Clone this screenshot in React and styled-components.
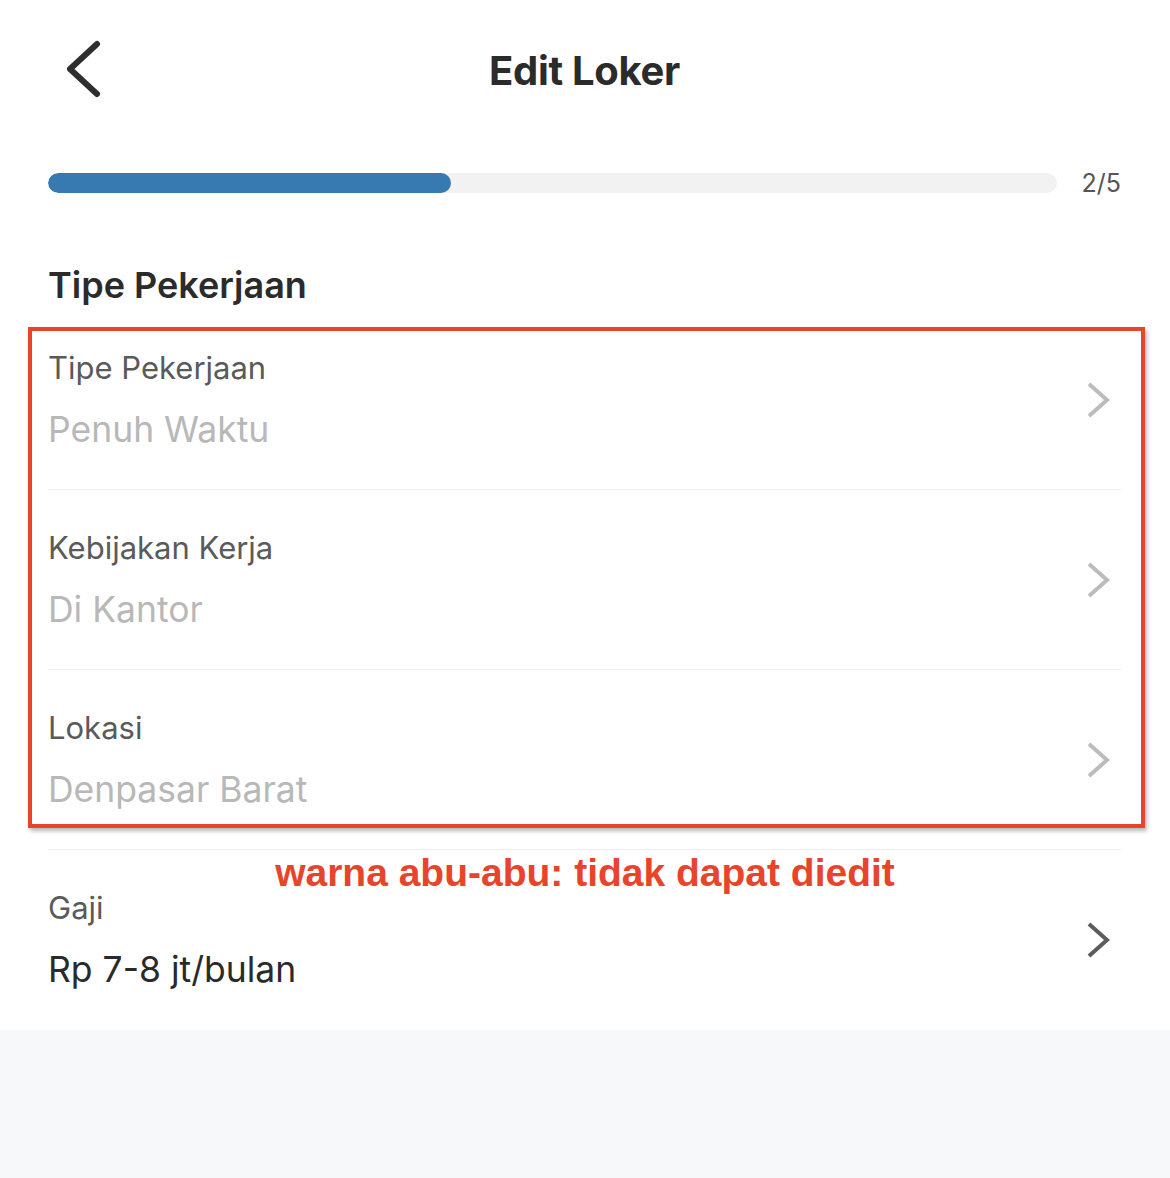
import React from "react";
import styled, { createGlobalStyle } from "styled-components";

const Global = createGlobalStyle`
  html, body { margin: 0; padding: 0; background: #f7f8fa; }
  body { font-family: Inter, "Noto Sans", sans-serif; -webkit-font-smoothing: antialiased; }
`;

const Screen = styled.div`
  position: relative;
  width: 1170px;
  min-height: 1178px;
  background: #f7f8fa;
`;

const Panel = styled.div`
  background: #ffffff;
  padding: 0 49px 0 48px;
  display: flex;
  flex-direction: column;
`;

const Header = styled.header`
  height: 140px;
  display: grid;
  grid-template-columns: 1fr auto 1fr;
  align-items: center;
`;

const BackButton = styled.button`
  justify-self: start;
  margin-left: 16px;
  padding: 0;
  border: none;
  background: none;
  display: flex;
`;

const Title = styled.h1`
  margin: 0;
  font-size: 40px;
  font-weight: 700;
  color: #2b2b2b;
  letter-spacing: -0.3px;
`;

const ProgressRow = styled.div`
  margin-top: 33px;
  height: 20px;
  display: flex;
  align-items: center;
  gap: 25px;
`;

const Track = styled.div`
  flex: 1;
  height: 20px;
  border-radius: 10px;
  background: #f2f2f2;
  overflow: hidden;
`;

const Fill = styled.div`
  height: 100%;
  border-radius: 10px;
  background: #377ab2;
`;

const StepText = styled.span`
  font-size: 25px;
  color: #555555;
  line-height: 20px;
`;

const SectionTitle = styled.h2`
  margin: 72px 0 5px;
  font-size: 36px;
  line-height: 40px;
  font-weight: 600;
  color: #2b2b2b;
`;

const Row = styled.div`
  display: flex;
  align-items: center;
  padding: 40px 0 ${(p) => (p.$last ? "40px" : "39px")};
  border-bottom: ${(p) => (p.$last ? "none" : "1px solid #eeeeee")};
`;

const RowText = styled.div`
  flex: 1;
  display: flex;
  flex-direction: column;
  gap: 24px;
`;

const Label = styled.div`
  font-size: 31px;
  line-height: 36px;
  color: #5a5a5a;
`;

const Value = styled.div`
  font-size: 35.5px;
  line-height: 40px;
  color: ${(p) => (p.$disabled ? "#b8b8b8" : "#2a2a2a")};
`;

const ChevronBox = styled.div`
  margin-right: 11px;
  display: flex;
`;

const Highlight = styled.div`
  position: absolute;
  left: 28px;
  top: 327px;
  width: 1117px;
  height: 501px;
  box-sizing: border-box;
  border: 4px solid #e8442b;
  box-shadow: 2px 3px 4px rgba(0, 0, 0, 0.28);
  pointer-events: none;
`;

const Note = styled.div`
  position: absolute;
  left: 0;
  right: 0;
  top: 850px;
  text-align: center;
  font-family: "Liberation Sans", Arial, sans-serif;
  font-weight: 700;
  font-size: 39px;
  line-height: 46px;
  color: #e8442b;
  pointer-events: none;
`;

const Chevron = ({ color }) => (
  <svg width="24" height="36" viewBox="0 0 24 36">
    <polyline points="3,2 21,18 3,34" fill="none" stroke={color} strokeWidth="4" />
  </svg>
);

const BackIcon = () => (
  <svg width="40" height="60" viewBox="0 0 40 60">
    <polyline
      points="33,4 6,29 33,54"
      fill="none"
      stroke="#2e2e2e"
      strokeWidth="6"
      strokeLinecap="round"
      strokeLinejoin="round"
    />
  </svg>
);

const rows = [
  { label: "Tipe Pekerjaan", value: "Penuh Waktu", disabled: true },
  { label: "Kebijakan Kerja", value: "Di Kantor", disabled: true },
  { label: "Lokasi", value: "Denpasar Barat", disabled: true },
  { label: "Gaji", value: "Rp 7-8 jt/bulan", disabled: false },
];

export default function App() {
  return (
    <Screen>
      <Global />
      <Panel>
        <Header>
          <BackButton aria-label="Kembali">
            <BackIcon />
          </BackButton>
          <Title>Edit Loker</Title>
          <span />
        </Header>
        <ProgressRow>
          <Track>
            <Fill style={{ width: `${(2 / 5) * 100}%` }} />
          </Track>
          <StepText>2/5</StepText>
        </ProgressRow>
        <SectionTitle>Tipe Pekerjaan</SectionTitle>
        {rows.map((r, i) => (
          <Row key={r.label} $last={i === rows.length - 1}>
            <RowText>
              <Label>{r.label}</Label>
              <Value $disabled={r.disabled}>{r.value}</Value>
            </RowText>
            <ChevronBox>
              <Chevron color={r.disabled ? "#bcbcbc" : "#5c5c5c"} />
            </ChevronBox>
          </Row>
        ))}
      </Panel>
      <Highlight />
      <Note>warna abu-abu: tidak dapat diedit</Note>
    </Screen>
  );
}
